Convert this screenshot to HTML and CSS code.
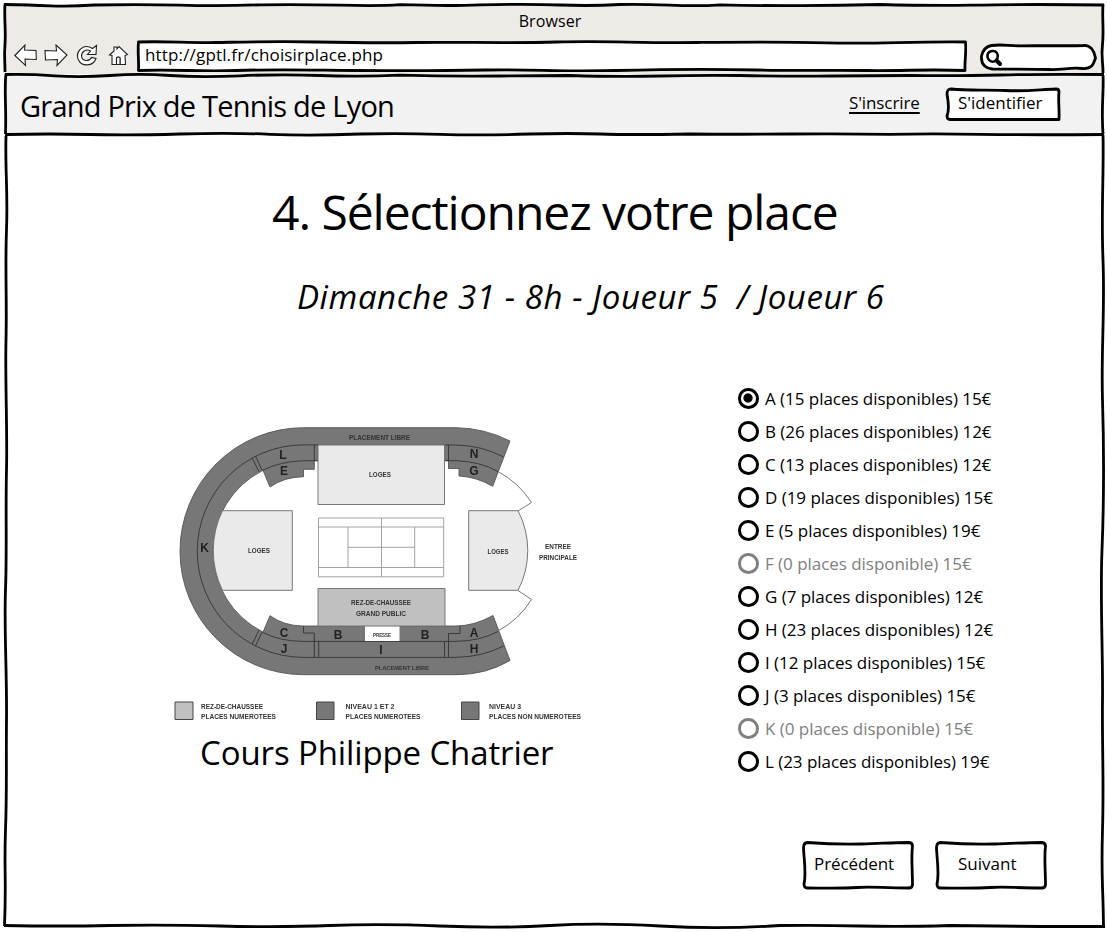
FILE: index.html
```html
<!DOCTYPE html>
<html lang="fr">
<head>
<meta charset="utf-8">
<title>Grand Prix de Tennis de Lyon</title>
<link rel="stylesheet" href="styles.css">
</head>
<body>
<div class="window">
  <svg class="frame" viewBox="0 0 1107 932" aria-hidden="true">
    <path class="chrome-fill" d="M5 5H1103V74H5Z"/>
    <path class="header-fill" d="M6 75H1103V134H6Z"/>
    <path d="M4 4.500Q30 5 50 5.800T95 5Q140 4 180 5.200T260 4.800Q300 4.200 340 5.200T400 4.700Q450 6.200 480 4.800Q530 3.800 560 5T620 4.500Q640 4 670 5.200T720 4.800Q760 5.800 800 5.600T880 4.500Q930 5.800 970 5.200T1040 4.500L1104 5"/>
    <path d="M5 4C4 18 6 30 5 44S5 60 5 72"/>
    <path d="M1103 4C1102 20 1104 30 1102.500 44S1103 60 1103 73"/>
    <path d="M5 74.500Q30 74 55 75.800T110 75.500T170 75.500T240 75.800T320 75.500T400 75.200Q450 76.500 500 76T570 75.500Q620 77 660 76T740 75.500Q790 76.500 830 76T910 75.500Q960 76 1000 75T1104 74.500"/>
    <path d="M6 74C4 90 6.500 105 5.500 134"/>
    <path d="M1103 75C1104 92 1101 105 1103 134"/>
    <path d="M5 134.500Q50 133.500 90 134.500T180 134T270 134.300T360 134Q400 133 440 134.300T530 134Q570 133 600 134T690 134Q740 134.500 790 134T890 134.300Q930 133.500 980 134.300T1104 134.500"/>
    <path d="M6 136C5 170 8 190 6.500 230S7 300 6 340S7.500 430 6.500 470S7 550 5.500 590S7 670 6.500 720S7 790 5.500 830S6.500 880 4.500 926"/>
    <path d="M1103 135C1104 170 1101 210 1103 260S1101 350 1102.500 400S1104 500 1102 550S1103 650 1102.500 700S1104 780 1102.500 830S1103 880 1103.500 926"/>
    <path d="M4 925.500Q60 926.500 110 925.500T220 926T330 925.500T440 926T550 925.500T660 926T780 925.500Q820 925 860 926T950 925.500Q1010 926 1040 926.500L1105 926.500"/>
  </svg>

  <header class="chrome">
    <div class="window-title"><span>Browser</span></div>
    <div class="toolbar">
      <svg class="nav-icons" viewBox="0 0 120 24" aria-hidden="true">
        <path d="M.8 11.500L11 1 10.500 6 22 6.500 22.300 15.500 11 15 11.500 21.500Z"/>
        <path d="M31 6.500L42.500 7 42 1 53 11 43 21.500 43.500 15.500 31.500 16Z"/>
        <path d="M78.500 4.500L82.500 1.500 82 10.500H73.500L76.500 7C72.500 4.500 67.500 7 67.500 12C68 17.500 75 18 77.500 13.500L82 14.500C79 22.500 68 23 64.500 16C60.500 7 70 -1 78.500 4.500Z"/>
        <path d="M95.500 11L100 7V3H103V5L105 2.500 113.500 10.500 111 11.500 111.500 20.500H106V14Q104 12 102.500 14V20.500H98V11.500Z"/>
        <path d="M102.500 20.500V14Q104.500 12 106 14V20.500Z"/>
      </svg>
      <div class="address">
        <svg class="outline" viewBox="0 0 830 32" aria-hidden="true"><path class="paper" d="M2 2C30 1 50 3 80 2.500S140 1.200 180 2S240 3.200 280 2.500S370 3.500 420 2S500 3.200 560 2.500S640 1.500 690 2.800S770 1.500 829 2C830 12 828 20 828.500 30.500C790 29 770 31 730 30.500S660 31 620 30S540 29 480 30.500S400 29 350 30S270 31 220 30.500S140 29 100 30.500S40 29 2 30.500C2.500 20 1 12 2 2Z"/></svg>
        <span>http://gptl.fr/choisirplace.php</span>
      </div>
      <div class="search">
        <svg class="outline" viewBox="0 0 118 28" aria-hidden="true">
          <path class="paper" d="M12 2.500C22 1 30 3 42 2.800S90 3 104 2.500C111 2 115 8 116 15C114 21 113 26 103 25.500C90 24 84 27 70 26.500S32 26 13 26C5 25 1.500 20 2 13Q4 4 12 2.500Z"/>
          <path class="lens" d="M12.500 8C17 7.500 19 11 18 15C16 20 11 19 9.500 17C6.500 13 8 8.500 12.500 8Z"/>
          <path class="lens-handle" d="M17 17.500L20.500 21"/>
        </svg>
      </div>
    </div>
  </header>

  <nav class="site-header">
    <div class="brand"><span>Grand Prix de Tennis de Lyon</span></div>
    <a class="signup"><span>S'inscrire</span></a>
    <div class="button login">
      <svg class="outline" viewBox="0 0 116 36" aria-hidden="true"><path class="paper" d="M6 3C25 5 40 3.500 60 4.500S90 4 111 3Q114 3 114 6C113 14 114.500 22 114 33.500H5Q2 33.500 2 30C4.500 24 3.500 16 2 8Q2 3 6 3Z"/></svg>
      <span>S'identifier</span>
    </div>
  </nav>

  <main>
    <h1><span>4. Sélectionnez votre place</span></h1>
    <h2><span>Dimanche 31 - 8h - Joueur 5&nbsp; / Joueur 6</span></h2>
    <div class="content">
      <figure>
        <svg class="plan" viewBox="170 420 420 310">
          <g class="stand">
            <path d="M303.500 427.700H456A123.500 123.500 0 0 1 510 441L492.700 486.300A74.600 74.600 0 0 0 459 476V468.500H448.500V460.700H444.500V445H318V460.700H314.300V469.300H303.500V476.700Q284 477 270 487L263 470.300A90.500 90.500 0 0 0 263 632.100L270 615.700Q284 626 303.500 626H456Q474 626 493 615.500L510 660.500Q486 674.700 456 674.700H303.500A123.500 123.500 0 0 1 303.500 427.700Z"/>
            <path class="line" d="M318 444.900H303.500A106.200 106.200 0 0 0 303.500 657.400H456Q482 657 503.500 646M444.500 445H456Q482 445.500 503.500 457M318 460.700H303.500Q280 461.500 262.500 470.300M444.500 460.700H456Q480 461.500 498 471.500M262.500 632.300Q280 641.400 303.500 641.400H456Q480 641 498 631.500M252.300 458.300L259 471.700M255.700 456.300L262 470.300M252.300 644L259 630M255.700 645.500L262 632.300M314.300 445V461M448.500 445V461M303.500 626V633H314.300V657.300M318.700 641V657.300M460 626V633.500H448.500V657.300M444.500 641V657.300"/>
          </g>
          <path class="thin" d="M498 471.500A90 90 0 0 1 531.500 502.500L518 511M498 631A90 90 0 0 0 531.500 599.500L518 590.500"/>
          <g class="box">
            <path d="M318 445H444.500V504.500H318Z"/>
            <path d="M222.500 510.700H292.300V590.300H222.500A90.500 90.500 0 0 1 222.500 510.700Z"/>
            <path d="M468.700 510.700H518A86 86 0 0 1 518 590.300H468.700Z"/>
            <path class="public" d="M318 588.500H445V626H318Z"/>
          </g>
          <path class="press" d="M365 626.500H399.500V641H365Z"/>
          <path class="court" d="M318.500 518H443.700V576.800H318.500ZM318.500 527H443.700M318.500 567.500H443.700M348 527V567.500M414.700 527V567.500M381.500 518V576.800M348 547.300H414.700"/>
          <g class="sector">
            <text x="283" y="459">L</text><text x="284" y="475">E</text><text x="474" y="458">N</text><text x="474" y="475">G</text><text x="204.500" y="552">K</text><text x="284" y="636.500">C</text><text x="284" y="652.500">J</text><text x="338" y="638.500">B</text><text x="425" y="638.500">B</text><text x="474" y="636.500">A</text><text x="474" y="652.500">H</text><text x="381" y="654">I</text>
          </g>
          <g class="tiny">
            <text x="349" y="439.500" textLength="61" lengthAdjust="spacingAndGlyphs">PLACEMENT LIBRE</text>
            <text x="369" y="476.500" textLength="22" lengthAdjust="spacingAndGlyphs">LOGES</text>
            <text x="248" y="553.300" textLength="22" lengthAdjust="spacingAndGlyphs">LOGES</text>
            <text x="487.500" y="553.500" textLength="21" lengthAdjust="spacingAndGlyphs">LOGES</text>
            <text x="545" y="548.500" textLength="26" lengthAdjust="spacingAndGlyphs">ENTREE</text>
            <text x="539" y="560" textLength="38" lengthAdjust="spacingAndGlyphs">PRINCIPALE</text>
            <text x="351" y="604.500" textLength="60" lengthAdjust="spacingAndGlyphs">REZ-DE-CHAUSSEE</text>
            <text x="356" y="616" textLength="50" lengthAdjust="spacingAndGlyphs">GRAND PUBLIC</text>
            <text class="small" x="373" y="637" textLength="18" lengthAdjust="spacingAndGlyphs">PRESSE</text>
            <text class="small" x="375" y="670" textLength="54" lengthAdjust="spacingAndGlyphs">PLACEMENT LIBRE</text>
            <text x="201" y="708.800" textLength="62" lengthAdjust="spacingAndGlyphs">REZ-DE-CHAUSSEE</text>
            <text x="201" y="719" textLength="75" lengthAdjust="spacingAndGlyphs">PLACES NUMEROTEES</text>
            <text x="345.500" y="708.800" textLength="49" lengthAdjust="spacingAndGlyphs">NIVEAU 1 ET 2</text>
            <text x="345.500" y="719" textLength="75" lengthAdjust="spacingAndGlyphs">PLACES NUMEROTEES</text>
            <text x="489" y="708.800" textLength="32" lengthAdjust="spacingAndGlyphs">NIVEAU 3</text>
            <text x="489" y="719" textLength="92" lengthAdjust="spacingAndGlyphs">PLACES NON NUMEROTEES</text>
          </g>
          <g class="legend">
            <path class="public" d="M175 702H193V719.500H175Z"/><path d="M316.500 702H334V719.500H316.500Z"/><path d="M461.500 702H479V719.500H461.500Z"/>
          </g>
        </svg>
        <figcaption><span>Cours Philippe Chatrier</span></figcaption>
      </figure>
      <ul class="places">
        <li><i class="radio checked"></i><span>A (15 places disponibles) 15€</span></li>
        <li><i class="radio"></i><span>B (26 places disponibles) 12€</span></li>
        <li><i class="radio"></i><span>C (13 places disponibles) 12€</span></li>
        <li><i class="radio"></i><span>D (19 places disponibles) 15€</span></li>
        <li><i class="radio"></i><span>E (5 places disponibles) 19€</span></li>
        <li class="disabled"><i class="radio"></i><span>F (0 places disponible) 15€</span></li>
        <li><i class="radio"></i><span>G (7 places disponibles) 12€</span></li>
        <li><i class="radio"></i><span>H (23 places disponibles) 12€</span></li>
        <li><i class="radio"></i><span>I (12 places disponibles) 15€</span></li>
        <li><i class="radio"></i><span>J (3 places disponibles) 15€</span></li>
        <li class="disabled"><i class="radio"></i><span>K (0 places disponible) 15€</span></li>
        <li><i class="radio"></i><span>L (23 places disponibles) 19€</span></li>
      </ul>
    </div>
    <div class="actions">
      <div class="button prev">
        <svg class="outline" viewBox="0 0 112 50" aria-hidden="true"><path class="paper" d="M5 2.500C25 4 40 4.500 60 4S90 2.500 107 2.500Q110.500 3 110.500 6C109 18 110.500 30 110.500 45Q110 48 107 48C80 48 70 46.500 55 47.500S20 48 5 48Q2 48 2 44C4.500 34 2 20 1.500 8Q1.500 3 5 2.500Z"/></svg>
        <span>Précédent</span>
      </div>
      <div class="button next">
        <svg class="outline" viewBox="0 0 112 50" aria-hidden="true"><path class="paper" d="M5 2.500C25 4 40 4.500 60 4S90 2.500 107 2.500Q110.500 3 110.500 6C109 18 110.500 30 110.500 45Q110 48 107 48C80 48 70 46.500 55 47.500S20 48 5 48Q2 48 2 44C4.500 34 2 20 1.500 8Q1.500 3 5 2.500Z"/></svg>
        <span>Suivant</span>
      </div>
    </div>
  </main>
</div>
</body>
</html>
```
FILE: styles.css
```css
* { box-sizing: border-box; }
body { margin: 0; background: #fff; color: #000; font: 400 17px/24px "Open Sans", "Noto Sans", sans-serif; }
.window { position: relative; width: 1107px; height: 932px; overflow: hidden; display: flex; flex-direction: column; }
.window span { position: relative; white-space: nowrap; }
.frame { position: absolute; inset: 0; width: 1107px; height: 932px; fill: none; stroke: #000; stroke-width: 2.8; }
.frame .chrome-fill { fill: #eeebe6; stroke: none; }
.frame .header-fill { fill: #f2f2f2; stroke: none; }
.outline { position: absolute; inset: 0; width: 100%; height: 100%; fill: none; stroke: #000; stroke-width: 2.8; stroke-linejoin: round; }
.paper { fill: #fff; }

.chrome { height: 75px; padding-top: 9px; }
.window-title { text-align: center; padding-right: 7px; font-size: 16px; letter-spacing: 0.1px; }
.toolbar { display: flex; padding: 7px 9px 0 14px; }
.nav-icons { position: relative; width: 120px; height: 24px; margin-top: 4px; fill: #fff; stroke: #222; stroke-width: 1.1; }
.address { position: relative; width: 831px; height: 32px; margin-left: 2px; padding: 3px 0 0 9px; letter-spacing: 0.16px; }
.search { position: relative; width: 119px; height: 28px; margin: 3px 0 0 12px; }
.lens { stroke-width: 2.5; }
.lens-handle { stroke-width: 4; stroke-linecap: round; }

.site-header { display: flex; height: 60px; padding: 11px 0 0 20px; }
.brand { width: 829px; font-size: 29px; line-height: 40px; letter-spacing: -0.78px; }
.signup { width: 96px; padding-top: 5px; letter-spacing: -0.1px; text-decoration: underline; text-underline-offset: 3px; text-decoration-thickness: 2px; }
.button { position: relative; }
.login { width: 116px; height: 36px; padding: 5px 0 0 13px; }

main { height: 797px; padding-top: 45px; }
h1, h2 { margin: 0; font-weight: inherit; }
h1 { padding-left: 272px; font-size: 48px; line-height: 64px; letter-spacing: -1.04px; }
h2 { margin-top: 29px; padding-left: 297px; font-size: 33px; line-height: 48px; font-style: italic; letter-spacing: 0.58px; }
.content { display: flex; height: 462px; padding: 61px 0 0 170px; }
figure { width: 568px; margin: 0; padding-top: 38px; }
.plan { position: relative; display: block; width: 420px; height: 310px; filter: blur(.4px); }
figcaption { padding-left: 30px; font-size: 33px; line-height: 46px; letter-spacing: -0.12px; }
.stand path { fill: #777; stroke: #555; stroke-width: .9; }
.stand .line { fill: none; stroke: #333; }
.thin { fill: none; stroke: #777; }
.box path { fill: #eaeaea; stroke: #777; }
.box .public, .legend .public { fill: #c0c0c0; }
.legend path { fill: #777; stroke: #444; }
.press { fill: #fff; }
.court { fill: none; stroke: #999; stroke-width: .9; }
.sector { font: 700 12px "Liberation Sans", sans-serif; fill: #222; text-anchor: middle; }
.tiny { font: 700 6.300px "Liberation Sans", sans-serif; fill: #333; }
.tiny .small { font-size: 5.300px; }

.places { list-style: none; margin: 0; padding: 0; letter-spacing: -0.04px; }
.places li { display: flex; align-items: center; height: 33px; gap: 6px; }
.radio { position: relative; width: 21px; height: 21px; border: 3px solid #000; border-radius: 48% 52% 50% 50%; background: #fff; }
.checked { background: radial-gradient(circle at 7px 7px, #000 4.200px, #fff 5px); }
.disabled { color: #808080; }
.disabled .radio { border-color: #808080; }
.actions { display: flex; gap: 21px; padding: 57px 0 0 802px; }
.prev, .next { width: 112px; height: 50px; padding-top: 12px; }
.prev { padding-left: 12px; letter-spacing: -0.1px; }
.next { padding-left: 23px; }
```
